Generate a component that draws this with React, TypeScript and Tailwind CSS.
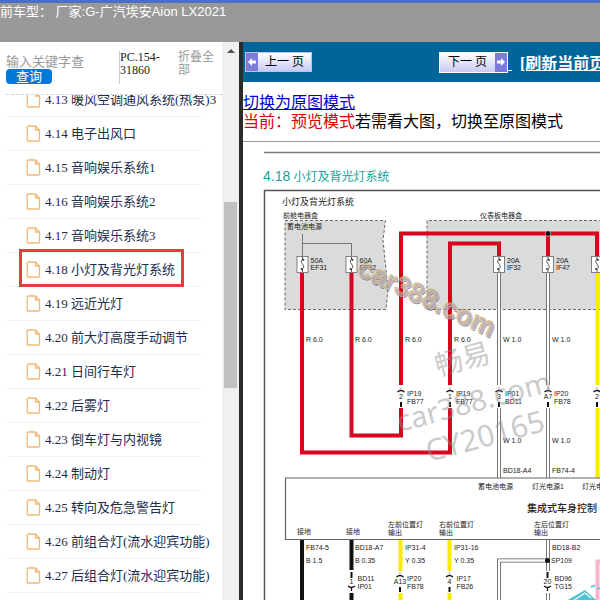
import { useState } from "react";

interface ManualItem {
  no: string;
  title: string;
}

const ITEMS: ManualItem[] = [
  { no: "4.13", title: "暖风空调通风系统(热泵)3" },
  { no: "4.14", title: "电子出风口" },
  { no: "4.15", title: "音响娱乐系统1" },
  { no: "4.16", title: "音响娱乐系统2" },
  { no: "4.17", title: "音响娱乐系统3" },
  { no: "4.18", title: "小灯及背光灯系统" },
  { no: "4.19", title: "远近光灯" },
  { no: "4.20", title: "前大灯高度手动调节" },
  { no: "4.21", title: "日间行车灯" },
  { no: "4.22", title: "后雾灯" },
  { no: "4.23", title: "倒车灯与内视镜" },
  { no: "4.24", title: "制动灯" },
  { no: "4.25", title: "转向及危急警告灯" },
  { no: "4.26", title: "前组合灯(流水迎宾功能)" },
  { no: "4.27", title: "后组合灯(流水迎宾功能)" },
];

function FileIcon() {
  return (
    <svg width="15" height="17" viewBox="0 0 15 17" className="shrink-0" fill="none" stroke="#f3b876" strokeWidth="1.3">
      <path d="M2.500 1h7l4 4v9.700q0 1.300-1.300 1.300H2.500q-1.300 0-1.300-1.300V2.300Q1.200 1 2.500 1z" />
      <path d="M9.500 1v4h4" />
    </svg>
  );
}

function ArrowTile({ flip }: { flip?: boolean }) {
  return (
    <span className="flex h-full w-3 items-center justify-center bg-[#7b7bdc]">
      <svg width="8" height="8" viewBox="0 0 8 8" className={flip ? "rotate-180" : ""}>
        <path d="M0 4L4 0v2.500h4v3H4V8z" fill="#fff" />
      </svg>
    </span>
  );
}

function Sidebar() {
  const [keyword, setKeyword] = useState("");
  const [active, setActive] = useState("4.18");

  return (
    <aside className="flex w-[222px] shrink-0 flex-col overflow-hidden bg-white pl-[6px] font-['Liberation_Serif','Noto_Sans_CJK_SC',serif]">
      <div className="flex h-[53px] shrink-0 items-start border-b border-dashed border-[#d4d4d4] pt-[9px]">
        <form className="w-[113px] pt-1" onSubmit={(e) => e.preventDefault()}>
          <input
            type="text"
            aria-label="关键字"
            value={keyword}
            onChange={(e) => setKeyword(e.target.value)}
            placeholder="输入关键字查"
            className="block h-[14px] w-20 text-[13px] leading-[14px] outline-none placeholder:text-[#999]"
          />
          <button type="submit" className="block h-[15px] w-[46px] rounded-[4px] bg-[#0078d7] text-[13px] leading-[15px] text-white">
            查询
          </button>
        </form>
        <div className="h-[33px] w-[59px] border-l border-[#ccc] text-[12px] leading-[13px] text-[#222]">
          PC.154-
          <br />
          31860
        </div>
        <button type="button" className="w-[36px] text-left text-[12px] leading-[13px] text-[#999]">
          折叠全部
        </button>
      </div>
      <div className="min-h-0 flex-1 overflow-hidden">
        <ul className="-mt-3">
          {ITEMS.map((item) => (
            <li key={item.no} className="relative mr-5 h-[34px] border-b border-[#f0f0f0]">
              <a
                href={`#${item.no}`}
                onClick={() => setActive(item.no)}
                className="flex h-full items-center gap-1 pl-5 text-[13px] whitespace-nowrap text-[#1c2e4f]"
              >
                <FileIcon />
                {item.no} {item.title}
              </a>
              {active === item.no && (
                <span className="pointer-events-none absolute -top-1 left-[13px] h-[38px] w-[165px] border-3 border-[#e63c3c]" />
              )}
            </li>
          ))}
        </ul>
      </div>
    </aside>
  );
}

function ScrollTrack() {
  return (
    <div className="flex w-[17px] shrink-0 flex-col items-center bg-[#f0f0f0]">
      <div className="flex h-[18px] items-center">
        <svg width="8" height="4" viewBox="0 0 8 4">
          <path d="M4 0l4 4H0z" fill="#505050" />
        </svg>
      </div>
      <div className="grow-142" />
      <div className="w-[13px] grow-186 bg-[#c1c1c1]" />
      <div className="grow-212" />
    </div>
  );
}

// Wire fuse, (x, 264) is the middle of the body
function Fuse({ x, amp, code }: { x: number; amp?: string; code?: string }) {
  return (
    <g>
      <rect x={x - 5.5} y="256.500" width="11" height="16" fill="#fff" stroke="#666" strokeWidth="0.8" />
      <path
        d={`M${x} 257v3 M${x} 269v3 M${x + 1} 259q-4 1.500 -1 5t-1 5.500`}
        fill="none"
        stroke="#444"
        strokeWidth="0.9"
      />
      <circle cx={x + 1} cy="260" r="0.9" fill="#333" />
      <circle cx={x - 1} cy="269" r="0.9" fill="#333" />
      <text x={x + 8} y="263">{amp}</text>
      <text x={x + 8} y="270">{code}</text>
    </g>
  );
}

function Plug({ x, y, pin, a, b, down, dx = 6 }: { x: number; y: number; pin: string; a?: string; b?: string; down?: boolean; dx?: number }) {
  return (
    <g>
      {down ? (
        <>
          <path d={`M${x} ${y}v6`} stroke="#111" strokeWidth="2" />
          <path d={`M${x - 3.5} ${y + 14}q3.500 3 7 0M${x} ${y + 16}v3`} fill="none" stroke="#111" strokeWidth="1.3" />
        </>
      ) : (
        <>
          <path d={`M${x - 3.5} ${y + 5}q3.500 -3 7 0`} fill="none" stroke="#111" strokeWidth="1.4" />
          <path d={`M${x} ${y}v3`} stroke="#888" strokeWidth="0.7" />
          <path d={`M${x} ${y + 15}v5`} stroke="#111" strokeWidth="2" />
        </>
      )}
      <text x={x} y={y + 12} textAnchor="middle">{pin}</text>
      <text x={x + dx} y={y + 9}>{a}</text>
      <text x={x + dx} y={y + 17}>{b}</text>
    </g>
  );
}

function WhiteWire({ x, y1, y2 }: { x: number; y1: number; y2: number }) {
  return (
    <g>
      <path d={`M${x} ${y1}V${y2}`} stroke="#555" strokeWidth="4" />
      <path d={`M${x} ${y1}V${y2}`} stroke="#fff" strokeWidth="2.400" />
    </g>
  );
}

function WiringDiagram() {
  return (
    <svg
      viewBox="243 142 357 458"
      width="357"
      height="458"
      className="block shrink-0 font-['Liberation_Sans','Noto_Sans_CJK_SC',sans-serif]"
      fontSize="7"
      fill="#222"
    >
      <path d="M264 152.500H600" stroke="#777" strokeWidth="1.500" />
      <path d="M600 190.500H264.500V600" fill="none" stroke="#555" strokeWidth="1.500" />
      <text x="263" y="181" fontSize="12" fill="#1a9f97">
        <tspan fontSize="14">4.18</tspan> 小灯及背光灯系统
      </text>
      <text x="282" y="205" fontSize="9">小灯及背光灯系统</text>
      <text x="283" y="218">前舱电器盒</text>
      <text x="480" y="218">仪表板电器盒</text>

      {/* fuse boxes */}
      <g fill="#dadbdb" stroke="#666" strokeWidth="1" strokeDasharray="3 2">
        <path d="M285 220.500H385.500L383 240L388 289L386 309.500H285z" />
        <path d="M602 220.500H427V309.500H602" />
      </g>
      <text x="287" y="229">蓄电池电源</text>
      <path d="M302.500 234V256M302.500 243.500H351.500V256" fill="none" stroke="#777" strokeWidth="1" />

      {/* battery feed */}
      <g fill="none" stroke="#d9041d" strokeWidth="4">
        <path d="M302 273V452.500H450V408" />
        <path d="M351.500 273V435.500H401V408" />
        <path d="M401 385V233.500H597V256" />
        <path d="M450 385V243.500H499V256" />
        <path d="M548 233V256" />
      </g>
      <circle cx="548" cy="233.500" r="2.800" fill="#111" stroke="#fff" strokeWidth="0.5" />

      <WhiteWire x={499} y1={273} y2={385} />
      <WhiteWire x={548} y1={273} y2={385} />
      <WhiteWire x={499} y1={408} y2={478} />
      <WhiteWire x={548} y1={408} y2={478} />
      <path d="M597.500 273V385M597.500 408V478" stroke="#f8ec00" strokeWidth="4" />

      <Fuse x={302.500} amp="50A" code="EF31" />
      <Fuse x={351.500} amp="60A" code="EF32" />
      <Fuse x={499} amp="20A" code="IF32" />
      <Fuse x={548} amp="20A" code="IF47" />
      <Fuse x={597} />

      <text x="306" y="342">R 6.0</text>
      <text x="355" y="342">R 6.0</text>
      <text x="405" y="342">R 6.0</text>
      <text x="454" y="342">R 6.0</text>
      <text x="503" y="342">W 1.0</text>
      <text x="552" y="342">W 1.0</text>

      <Plug x={401} y={387} pin="2" a="IP19" b="FB77" />
      <Plug x={450} y={387} pin="1" a="IP19" b="FB77" />
      <Plug x={499} y={387} pin="3" a="IP01" b="BD11" />
      <Plug x={548} y={387} pin="A7" a="IP20" b="FB78" />
      <Plug x={597} y={387} pin="2" />

      <text x="503" y="443">W 1.0</text>
      <text x="552" y="443">W 1.0</text>
      <text x="503" y="473">BD18-A4</text>
      <text x="552" y="473">FB74-4</text>

      {/* body control module */}
      <path d="M602 478H285.500V539.500H602" fill="none" stroke="#666" strokeWidth="1.200" />
      <text x="478" y="489">蓄电池电源</text>
      <text x="532" y="489">灯光电源1</text>
      <text x="582" y="489">灯光电源2</text>
      <text x="527" y="512" fontSize="10" fontWeight="500">集成式车身控制</text>
      <text x="297" y="534">接地</text>
      <text x="346" y="534">接地</text>
      <text x="388" y="527">左前位置灯</text>
      <text x="388" y="535">输出</text>
      <text x="439" y="527">右前位置灯</text>
      <text x="439" y="535">输出</text>
      <text x="534" y="527">左后位置灯</text>
      <text x="534" y="535">输出</text>

      <path d="M302 540V600M351.500 540V570M351.500 593V600" stroke="#111" strokeWidth="4" />
      <path d="M400.500 540V571M400.500 593V600M449.500 540V571M449.500 593V600" stroke="#f8ec00" strokeWidth="4" />
      <WhiteWire x={548} y1={540} y2={571} />
      <WhiteWire x={548} y1={593} y2={600} />
      <path d="M546 560.500H499V600" fill="none" stroke="#555" strokeWidth="4" />
      <path d="M546 560.500H499V600" fill="none" stroke="#fff" strokeWidth="2.400" />
      <circle cx="547.500" cy="560.500" r="2.500" fill="#111" />
      <text x="551" y="563">SP109</text>

      <text x="306" y="550">FB74-5</text>
      <text x="306" y="563">B 1.5</text>
      <text x="355" y="550">BD18-A7</text>
      <text x="355" y="563">B 0.35</text>
      <text x="405" y="550">IP31-4</text>
      <text x="405" y="563">Y 0.35</text>
      <text x="454" y="550">IP31-16</text>
      <text x="454" y="563">Y 0.35</text>
      <text x="552" y="550">BD18-B2</text>
      <Plug x={351.500} y={572} pin="1" a="BD11" b="IP01" down />
      <Plug x={400} y={572} pin="A13" a="IP20" b="FB78" dx={7} />
      <Plug x={449.500} y={572} pin="4" a="IP17" b="FB26" dx={7} />
      <Plug x={547.500} y={572} pin="20" a="BD96" b="TG15" down dx={7} />

      {/* watermarks */}
      <g fill="#8c8c8c" opacity="0.450" className="font-['Noto_Sans','Noto_Sans_CJK_SC',sans-serif]">
        <text transform="translate(438 376) rotate(-15)" fontSize="28">畅易</text>
        <text transform="translate(400 432) rotate(-15)" fontSize="29">car388.com</text>
        <text transform="translate(429 462) rotate(-15)" fontSize="30">CY20165</text>
      </g>
      <g transform="translate(356 275) rotate(25)" fontSize="27" fontWeight="700" opacity="0.750">
        <text x="1" y="1" fill="#6d5a86">car388.com</text>
        <text x="-1" y="-1" fill="#b99a3e">car388.com</text>
        <text fill="#a796a8" stroke="#ddd08e" strokeWidth="0.6">car388.com</text>
      </g>

      {/* site logo corner */}
      <path d="M597.500 600V561.500H602" fill="none" stroke="#f6b4cf" strokeWidth="4" />
      <path d="M566 601L585 590L597 601z" fill="#4fc3cf" />
      <path d="M573 601L585 593L591 598" fill="none" stroke="#d8f3f5" strokeWidth="1.500" />
      <path d="M591 587l4-1.500M597 589l3-1" stroke="#6cc9dc" strokeWidth="2" />
    </svg>
  );
}

export default function App() {
  return (
    <div className="flex h-screen flex-col overflow-hidden bg-white">
      <header className="h-[42px] shrink-0 border-t-3 border-[#4a6fcb] bg-[#999] font-['Liberation_Sans','Noto_Sans_CJK_SC',sans-serif] text-[13px] leading-[18px] whitespace-nowrap text-white">
        前车型： 厂家:G-广汽埃安Aion LX2021
      </header>
      <div className="flex min-h-0 flex-1">
        <Sidebar />
        <ScrollTrack />
        <main className="flex min-w-0 flex-1 flex-col overflow-hidden border-l-4 border-[#2b2b2b] font-['Liberation_Serif','Noto_Sans_CJK_SC',serif] text-[16px] text-black">
          <nav className="flex h-10 shrink-0 items-center overflow-hidden bg-[#069] pl-[2px] whitespace-nowrap">
            <button
              type="button"
              className="flex h-5 w-[67px] shrink-0 items-center border border-[#b9c4ee] bg-linear-to-b from-white to-[#c9c9f5] text-[12px]"
            >
              <ArrowTile />
              <span className="flex-1">上一 页</span>
            </button>
            <button
              type="button"
              className="ml-[127px] flex h-[21px] w-[69px] shrink-0 items-center border border-white bg-linear-to-b from-white to-[#c9c9f5] text-[12px]"
            >
              <span className="flex-1">下一 页</span>
              <ArrowTile flip />
            </button>
            <span className="h-[18px] w-1 shrink-0 border-b border-white" />
            <a href="#refresh" className="ml-2 pt-[3px] font-bold text-white underline">
              [刷新当前页]
            </a>
          </nav>
          <div className="shrink-0 border-b border-[#999] pt-[11px] pb-[10px] leading-[19px] whitespace-nowrap">
            <a href="#original" className="text-[#0000cc] underline">
              切换为原图模式
            </a>
            <p>
              <span className="text-[#d00]">当前：预览模式</span>若需看大图，切换至原图模式
            </p>
          </div>
          <WiringDiagram />
        </main>
      </div>
    </div>
  );
}
